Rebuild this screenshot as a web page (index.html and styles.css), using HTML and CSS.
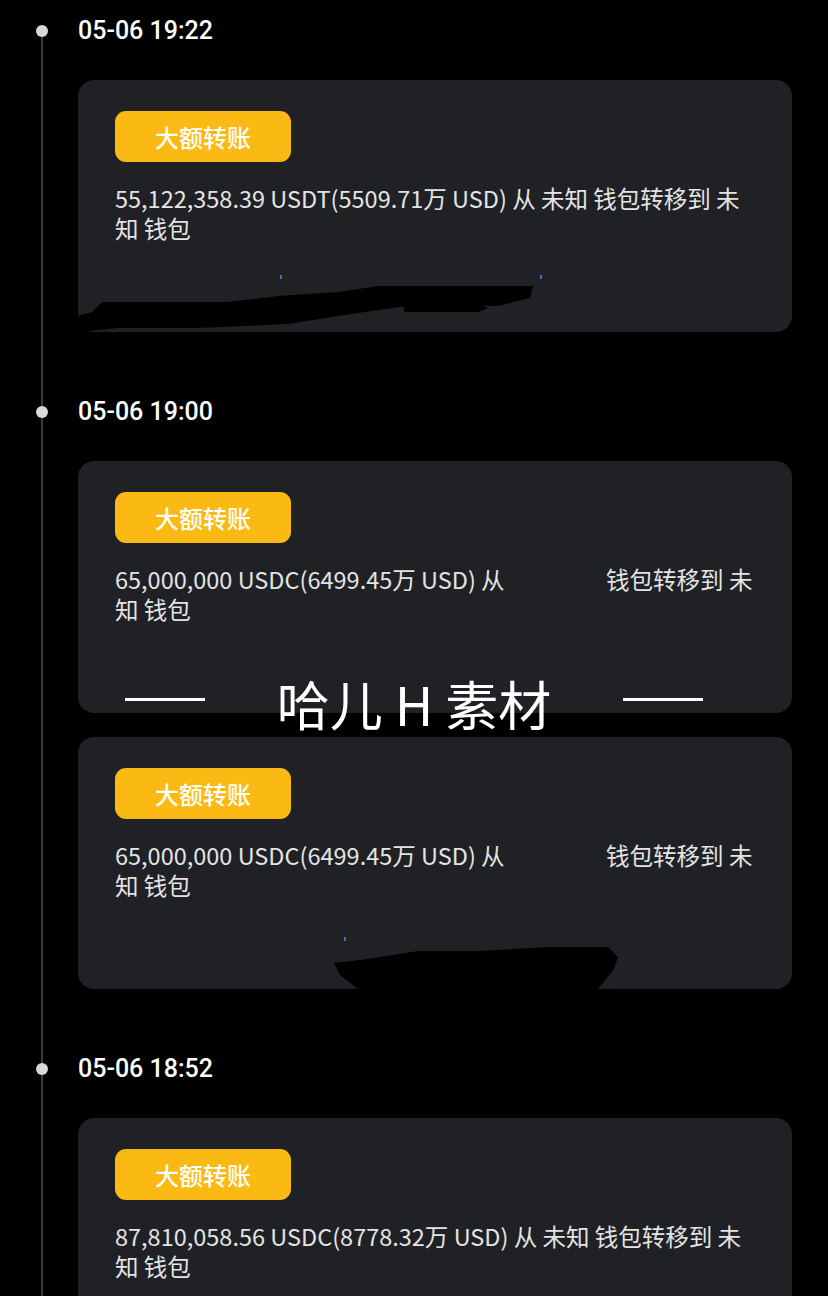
FILE: index.html
```html
<!DOCTYPE html>
<html lang="zh-CN">

<head>
    <meta charset="UTF-8">
    <meta name="viewport" content="width=device-width, initial-scale=1.0">
    <title>大额转账</title>
    <link rel="stylesheet" href="styles.css">
</head>

<body>
    <main class="timeline">
        <section class="group">
            <div class="time"><span class="dot"></span>05-06 19:22</div>
            <div class="card">
                <div class="badge">大额转账</div>
                <p class="msg">55,122,358.39 USDT(5509.71万 USD) 从 未知 钱包转移到 未知 钱包</p>
                <svg class="mask" viewBox="0 0 714 60" preserveAspectRatio="none">
                    <path d="M0 44 L14 40 L24 30 L150 30 L200 24 L260 20 L300 14 L455 14 L452 26 L420 34 L330 34 L300 38 L260 44 L210 52 L120 56 L40 56 L0 60 Z" fill="#000" />
                    <path d="M326 32 L400 32 L410 36 L400 40 L326 40 Z" fill="#000" />
                </svg>
                <span class="speck" style="left:202px;top:195px"></span>
                <span class="speck" style="left:462px;top:195px"></span>
            </div>
        </section>

        <section class="group">
            <div class="time"><span class="dot"></span>05-06 19:00</div>
            <div class="card">
                <div class="badge">大额转账</div>
                <p class="msg">65,000,000 USDC(6499.45万 USD) 从 <span class="hidden"></span> 钱包转移到 未知 钱包</p>
            </div>
            <div class="card">
                <div class="badge">大额转账</div>
                <p class="msg">65,000,000 USDC(6499.45万 USD) 从 <span class="hidden"></span> 钱包转移到 未知 钱包</p>
                <svg class="mask" viewBox="0 0 714 60" preserveAspectRatio="none">
                    <path d="M256 34 L290 30 L340 22 L400 22 L470 18 L530 18 L540 28 L536 40 L520 60 L280 60 L262 46 Z" fill="#000" />
                </svg>
                <span class="speck" style="left:266px;top:200px"></span>
            </div>
        </section>

        <section class="group">
            <div class="time"><span class="dot"></span>05-06 18:52</div>
            <div class="card">
                <div class="badge">大额转账</div>
                <p class="msg">87,810,058.56 USDC(8778.32万 USD) 从 未知 钱包转移到 未知 钱包</p>
            </div>
        </section>
    </main>

    <div class="watermark">
        <span class="rule"></span>
        <span class="mark">哈儿 H 素材</span>
        <span class="rule"></span>
    </div>
</body>

</html>
```

FILE: styles.css
```css
* {
    box-sizing: border-box;
}

body {
    margin: 0;
    background-color: #000;
    color: #e6e6e6;
    font-family: "Noto Sans CJK SC", "Noto Sans", sans-serif;
    overflow: hidden;
    height: 1296px;
}

.timeline {
    position: relative;
    padding: 11px 36px 0 78px;
}

/* the vertical line on the left */
.timeline::before {
    content: "";
    position: absolute;
    left: 41px;
    top: 31px;
    bottom: 0;
    width: 2px;
    background-color: #3a3a3a;
}

.group {
    margin-bottom: 60px;
}

.time {
    position: relative;
    height: 40px;
    line-height: 40px;
    font-family: Roboto, "Noto Sans", sans-serif;
    font-weight: 500;
    font-size: 25px;
    color: #fff;
    margin-bottom: 29px;
}

.dot {
    position: absolute;
    left: -42px;
    top: 14px;
    width: 12px;
    height: 12px;
    border-radius: 50%;
    background-color: #d8d8d8;
}

.card {
    position: relative;
    height: 252px;
    background-color: #1f2124;
    border-radius: 16px;
    padding: 31px 34px 0 37px;
    overflow: hidden;
}

.card + .card {
    margin-top: 24px;
}

.badge {
    width: 176px;
    height: 51px;
    line-height: 51px;
    border-radius: 11px;
    background-color: #fbb914;
    color: #fff;
    text-align: center;
    font-size: 24px;
    font-weight: 500;
}

.msg {
    margin: 21px 0 0;
    font-size: 23.5px;
    line-height: 30px;
    color: #e4e4e4;
}

.hidden {
    display: inline-block;
    width: 91px;
}

.mask {
    position: absolute;
    left: 0;
    bottom: 0;
    width: 100%;
    height: 60px;
}

.speck {
    position: absolute;
    width: 2px;
    height: 4px;
    background-color: #3f6fd0;
}

.watermark {
    position: absolute;
    left: 0;
    right: 0;
    top: 670px;
    display: flex;
    align-items: center;
    justify-content: center;
    gap: 72px;
    color: #fff;
}

.rule {
    width: 80px;
    height: 3px;
    margin-bottom: 8px;
    background-color: #fff;
}

.mark {
    font-size: 53px;
    line-height: 66px;
    font-weight: 400;
}
```
